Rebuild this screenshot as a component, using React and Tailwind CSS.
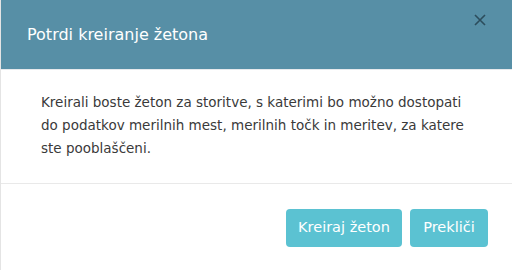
import React from "react";

export default function App() {
  return (
    <div className="flex h-[270px] w-[512px] overflow-hidden bg-white" style={{ fontFamily: "'DejaVu Sans', sans-serif" }}>
      <div className="w-px shrink-0 bg-[#e4e4e4]" />
      <div className="flex min-w-0 flex-1 flex-col">
        <div className="flex h-[70px] shrink-0 items-start justify-between border-b border-[#e6e9ec] bg-[#578fa6] pl-[26px] pr-[25px]">
          <h2 className="mt-[23px] text-[16px] font-normal text-white">Potrdi kreiranje žetona</h2>
          <button className="mt-[13px] flex h-[14px] w-[14px] items-center justify-center text-[#2c4d5c]">
            <svg viewBox="0 0 12 12" className="h-[12px] w-[12px]" fill="none" stroke="currentColor" strokeWidth="1.6">
              <path d="M1 1L11 11M11 1L1 11" />
            </svg>
          </button>
        </div>
        <div className="h-[114px] shrink-0 border-b border-[#e9e9e9] px-[40px] pt-[21px]">
          <p className="w-[426px] text-[13.5px] leading-[23px] text-[#3a3a3a]">
            Kreirali boste žeton za storitve, s katerimi bo možno dostopati do podatkov merilnih mest, merilnih točk in meritev, za katere ste pooblaščeni.
          </p>
        </div>
        <div className="flex justify-end gap-[8px] pr-[24px] pt-[25px]">
          <button className="h-[38px] w-[116px] rounded-[4px] bg-[#5bc2d2] text-[14.5px] text-white">Kreiraj žeton</button>
          <button className="h-[38px] w-[78px] rounded-[4px] bg-[#5bc2d2] text-[14.5px] text-white">Prekliči</button>
        </div>
      </div>
    </div>
  );
}
